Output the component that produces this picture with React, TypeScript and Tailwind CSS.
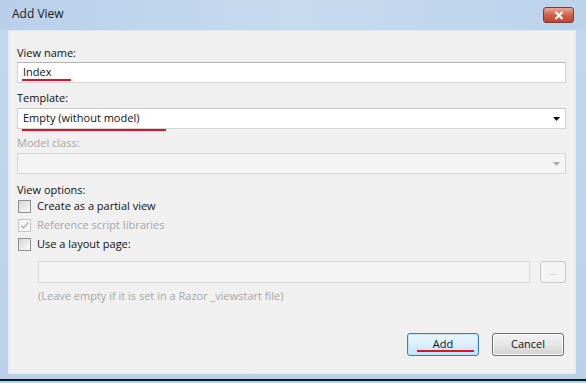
import React from 'react';

const Underline: React.FC<{ className: string }> = ({ className }) => (
    <div className={`absolute h-[2px] bg-[#e0141e] ${className}`} />
);

const CheckBox: React.FC<{ checked?: boolean; disabled?: boolean }> = ({ checked, disabled }) => (
    <div
        className={`w-[13px] h-[13px] border flex items-center justify-center ${
            disabled ? 'border-[#c8c8c8] bg-[#f4f4f4]' : 'border-[#8e8f8f] bg-gradient-to-br from-[#d6d6d6] to-[#fbfbfb]'
        }`}
    >
        {checked && (
            <svg width="9" height="9" viewBox="0 0 9 9">
                <path d="M1 4.5 L3.5 7 L8 1.5" fill="none" stroke={disabled ? '#b4b4b4' : '#333'} strokeWidth="1.4" />
            </svg>
        )}
    </div>
);

const Arrow: React.FC<{ color: string }> = ({ color }) => (
    <svg width="7" height="4" viewBox="0 0 7 4">
        <path d="M0 0 H7 L3.5 4 Z" fill={color} />
    </svg>
);

const App: React.FC = () => {
    return (
        <div className="w-[586px] h-[383px] flex flex-col bg-gradient-to-b from-[#c4d9ef] to-[#b9d1ea] font-['Segoe_UI','Open_Sans',sans-serif] text-[11px] text-[#111] overflow-hidden">
            {/* title bar */}
            <div className="h-[30px] flex items-center justify-between pl-[12px] pr-[12px] bg-gradient-to-r from-[#b8d0ea] via-[#c7dbef] to-[#bcd3ec]">
                <span className="text-[12px] text-[#1a1a1a] leading-none pb-[2px]">Add View</span>
                <div className="w-[31px] h-[16px] rounded-[3px] border border-[#7a3b34] bg-gradient-to-b from-[#e9a797] via-[#d0604b] to-[#c24330] flex items-center justify-center">
                    <svg width="10" height="9" viewBox="0 0 10 9">
                        <path d="M1.5 1 L8.5 8 M8.5 1 L1.5 8" stroke="#fff" strokeWidth="2.2" />
                    </svg>
                </div>
            </div>

            {/* client area */}
            <div className="flex-1 flex pl-[8px] pr-[10px]">
                <div className="flex-1 flex flex-col bg-[#f0f0f0] border border-[#dfe8f2] pl-[8px] pr-[9px] pt-[14px] relative">
                    <div className="h-[16px] leading-[16px]">View name:</div>
                    <div className="mt-[1px] h-[21px] bg-white border border-[#d4d4d4] border-t-[#b5b5b5] flex items-center pl-[5px]">
                        Index
                    </div>
                    <Underline className="left-[13px] top-[48px] w-[49px]" />

                    <div className="mt-[7px] h-[16px] leading-[16px]">Template:</div>
                    <div className="mt-[2px] h-[21px] bg-white border border-[#d4d4d4] border-t-[#c8c8c8] flex items-center justify-between pl-[5px] pr-[5px]">
                        <span>Empty (without model)</span>
                        <Arrow color="#111" />
                    </div>
                    <Underline className="left-[13px] top-[98px] w-[144px]" />

                    <div className="mt-[6px] h-[16px] leading-[16px] text-[#a6a6a6]">Model class:</div>
                    <div className="mt-[2px] h-[21px] bg-[#f4f4f4] border border-[#d6d6d6] flex items-center justify-end pr-[5px]">
                        <Arrow color="#a8a8a8" />
                    </div>

                    <div className="mt-[8px] h-[15px] leading-[15px]">View options:</div>
                    <div className="h-[19px] flex items-center gap-[6px] pl-[1px]">
                        <CheckBox />
                        <span>Create as a partial view</span>
                    </div>
                    <div className="h-[19px] flex items-center gap-[6px] pl-[1px] text-[#a6a6a6]">
                        <CheckBox checked disabled />
                        <span>Reference script libraries</span>
                    </div>
                    <div className="h-[19px] flex items-center gap-[6px] pl-[1px]">
                        <CheckBox />
                        <span>Use a layout page:</span>
                    </div>

                    <div className="mt-[7px] ml-[21px] flex gap-[10px]">
                        <div className="flex-1 h-[22px] bg-[#f4f4f4] border border-[#d8d8d8]" />
                        <div className="w-[26px] h-[22px] rounded-[3px] border border-[#c8c8c8] bg-[#f4f4f4] flex items-center justify-center text-[#b0b0b0] text-[9px] leading-none pb-[2px]">
                            ...
                        </div>
                    </div>
                    <div className="mt-[5px] ml-[21px] h-[16px] leading-[16px] text-[#a6a6a6]">
                        (Leave empty if it is set in a Razor _viewstart file)
                    </div>

                    <div className="mt-[29px] flex justify-end gap-[13px] pr-[2px]">
                        <div className="relative w-[72px] h-[23px] rounded-[3px] border border-[#3c7fb1] bg-gradient-to-b from-[#eaf6fd] via-[#d9f0fc] to-[#bee6fd] flex items-center justify-center shadow-[inset_0_0_0_1px_#bfe4f8]">
                            Add
                            <div className="absolute left-[9px] right-[4px] bottom-[3px] h-[2px] bg-[#e0141e]" />
                        </div>
                        <div className="w-[72px] h-[23px] rounded-[3px] border border-[#707070] bg-gradient-to-b from-[#f2f2f2] via-[#e6e6e6] to-[#d0d0d0] flex items-center justify-center shadow-[inset_0_0_0_1px_#fbfbfb]">
                            Cancel
                        </div>
                    </div>
                </div>
            </div>

            {/* bottom frame */}
            <div className="h-[5px]" />
            <div className="h-[2px] bg-[#101820]" />
            <div className="h-[2px] bg-[#9fd8ef]" />
        </div>
    );
};

export default App;
